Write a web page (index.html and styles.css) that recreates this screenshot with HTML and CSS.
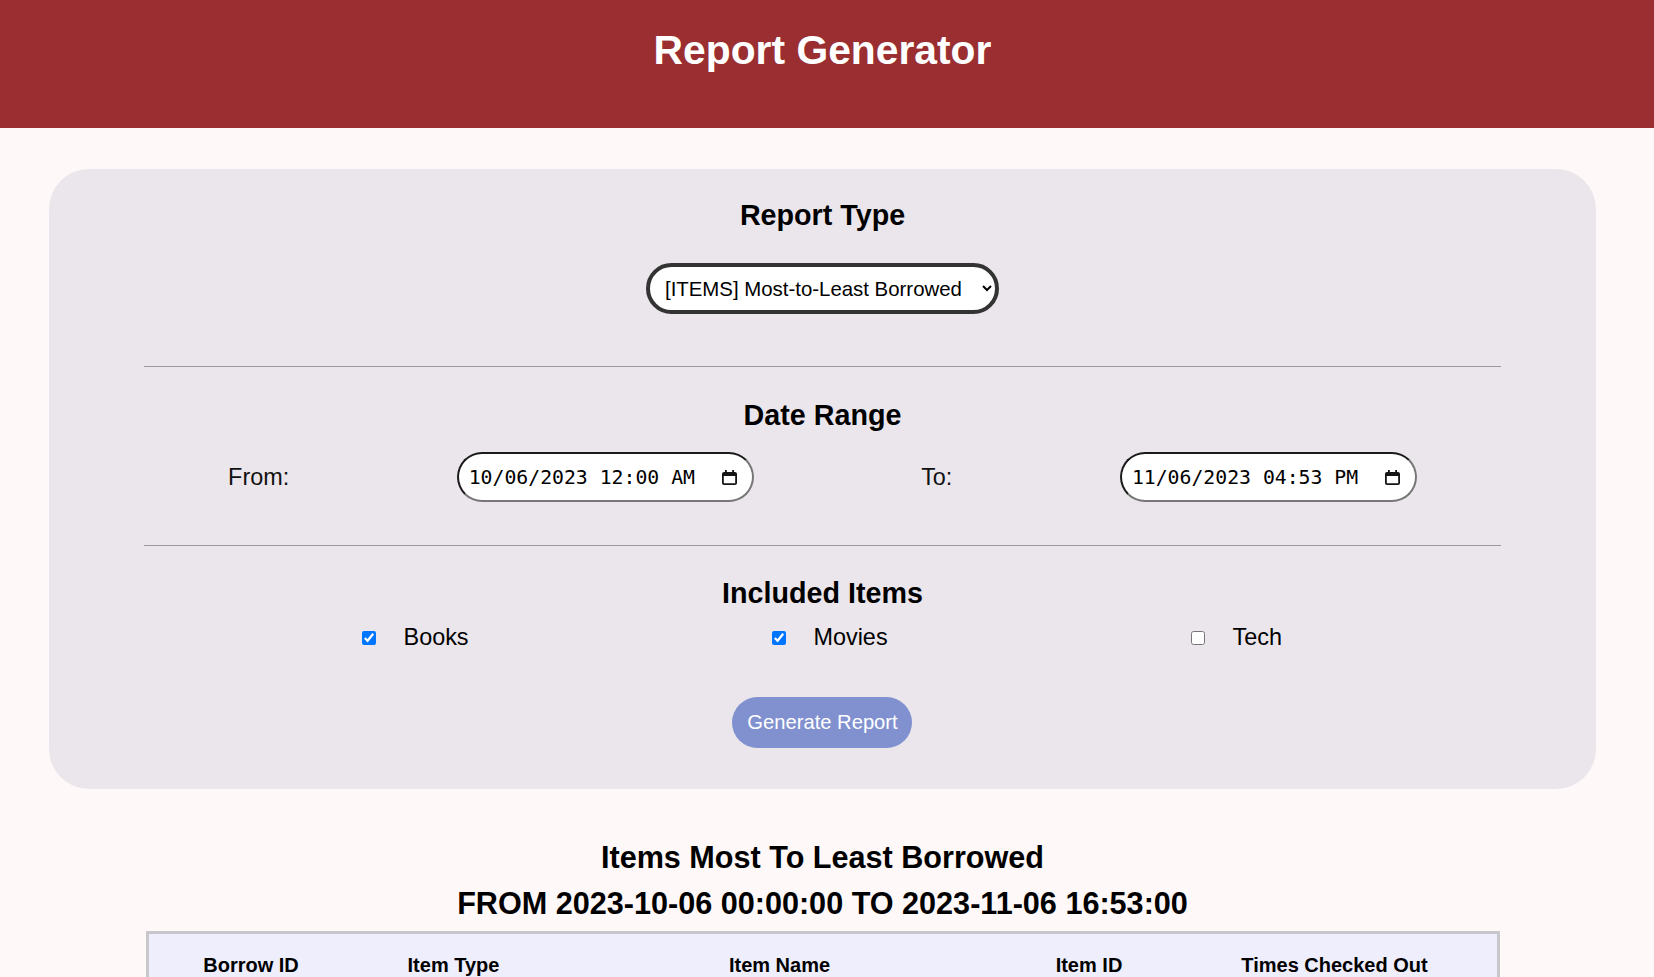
FILE: index.html
```html
<!DOCTYPE html>
<html lang="en">
<head>
<meta charset="utf-8">
<title>Report Generator</title>
<link rel="stylesheet" href="styles.css">
</head>
<body>
<header class="topbar">
  <h1 class="title">Report Generator</h1>
</header>
<main class="main">
  <section class="card">
    <h2 class="section-title">Report Type</h2>
    <div class="select-wrap">
      <select class="report-select">
        <option selected>[ITEMS] Most-to-Least Borrowed</option>
        <option>[ITEMS] Least-to-Most Borrowed</option>
        <option>[USERS] Most Active Borrowers</option>
      </select>
    </div>
    <hr class="divider">
    <h2 class="section-title">Date Range</h2>
    <div class="date-row">
      <span class="field-label">From:</span>
      <div class="datebox">
        <span class="datetext">10/06/2023 12:00 AM</span>
        <svg class="cal-icon" width="15" height="15" viewBox="0 0 15 15" aria-hidden="true"><path d="M13 2h-1V0h-1.8v2H4.8V0H3v2H2C.9 2 0 2.9 0 4v9c0 1.1.9 2 2 2h11c1.1 0 2-.9 2-2V4c0-1.1-.9-2-2-2zm.2 11.2H1.8V6h11.4v7.2z"/></svg>
      </div>
      <span class="field-label">To:</span>
      <div class="datebox">
        <span class="datetext">11/06/2023 04:53 PM</span>
        <svg class="cal-icon" width="15" height="15" viewBox="0 0 15 15" aria-hidden="true"><path d="M13 2h-1V0h-1.8v2H4.8V0H3v2H2C.9 2 0 2.9 0 4v9c0 1.1.9 2 2 2h11c1.1 0 2-.9 2-2V4c0-1.1-.9-2-2-2zm.2 11.2H1.8V6h11.4v7.2z"/></svg>
      </div>
    </div>
    <hr class="divider divider-second">
    <h2 class="section-title">Included Items</h2>
    <div class="check-row">
      <label class="check"><input class="check-box" type="checkbox" checked><span>Books</span></label>
      <label class="check"><input class="check-box" type="checkbox" checked><span>Movies</span></label>
      <label class="check"><input class="check-box" type="checkbox"><span>Tech</span></label>
    </div>
    <div class="btn-wrap">
      <button class="generate" type="button">Generate Report</button>
    </div>
  </section>

  <section class="results">
    <h3 class="results-title">Items Most To Least Borrowed</h3>
    <h3 class="results-title results-range">FROM 2023-10-06 00:00:00 TO 2023-11-06 16:53:00</h3>
    <table class="report-table">
      <colgroup>
        <col class="col-borrow">
        <col class="col-type">
        <col class="col-name">
        <col class="col-id">
        <col class="col-times">
      </colgroup>
      <thead>
        <tr>
          <th>Borrow ID</th>
          <th>Item Type</th>
          <th>Item Name</th>
          <th>Item ID</th>
          <th>Times Checked Out</th>
        </tr>
      </thead>
      <tbody></tbody>
    </table>
  </section>
</main>
</body>
</html>
```

FILE: styles.css
```css
html {
  background: #fef8f8;
}

body {
  margin: 0;
  background: #fef8f8;
  font-family: "Liberation Sans", Arial, sans-serif;
  color: #000;
}

.topbar {
  background: #9a2e30;
  height: 128px;
  box-sizing: border-box;
  padding: 27px 9px 0 0;
}

.title {
  margin: 0;
  color: #fff;
  font-size: 40.8px;
  line-height: 47px;
  font-weight: bold;
  text-align: center;
}

.main {
  margin-right: 9px;
  padding-bottom: 40px;
}

.card {
  width: 94%;
  box-sizing: border-box;
  margin: 41px auto 0;
  padding: 30px 95px 41px;
  background: #ebe6ec;
  border-radius: 40px;
}

.section-title {
  margin: 0;
  font-size: 28.7px;
  line-height: 32px;
  font-weight: bold;
  text-align: center;
}

.select-wrap {
  display: flex;
  justify-content: center;
  margin-top: 32px;
}

.report-select {
  width: 353px;
  height: 51px;
  box-sizing: border-box;
  font-family: "Liberation Sans", Arial, sans-serif;
  font-size: 20.4px;
  color: #000;
  padding: 0 8px 0 11px;
  border: 4px solid #333;
  border-radius: 26px;
  background-color: #fff;
}

.divider {
  margin: 52px 0 32px;
  height: 0;
  border: none;
  border-top: 1px solid #9a9a9a;
}

.divider-second {
  margin-top: 43px;
  margin-bottom: 31px;
}

.date-row {
  margin-top: 21px;
  display: flex;
  justify-content: space-around;
  align-items: center;
  height: 50px;
}

.field-label {
  font-size: 23.4px;
  line-height: 27px;
  color: #111;
}

.datebox {
  width: 297px;
  height: 50px;
  box-sizing: border-box;
  border: 2px solid;
  border-color: #1b1b1b #777 #777 #1b1b1b;
  border-radius: 25px;
  background: #fff;
  display: flex;
  align-items: center;
  justify-content: space-between;
  padding: 0 15px 0 10px;
  font-family: "DejaVu Sans Mono", monospace;
  font-size: 19.8px;
  color: #000;
}

.cal-icon {
  fill: #151515;
  flex: none;
}

.check-row {
  margin: 15px 67px 0 66px;
  display: flex;
  justify-content: space-around;
  align-items: center;
  height: 27px;
}

.check {
  display: flex;
  align-items: center;
  font-size: 23.4px;
  line-height: 27px;
  color: #000;
}

.check-box {
  width: 14px;
  height: 14px;
  margin: 0 27.5px 0 0;
}

.btn-wrap {
  display: flex;
  justify-content: center;
  margin-top: 46px;
}

.generate {
  width: 180px;
  height: 51px;
  padding: 0;
  border: none;
  border-radius: 26px;
  background: #8191cf;
  color: #fff;
  font-family: "Liberation Sans", Arial, sans-serif;
  font-size: 20.2px;
}

.results {
  width: 1354px;
  margin: 51px auto 0;
}

.results-title {
  margin: 0;
  font-size: 30.6px;
  line-height: 35px;
  font-weight: bold;
  text-align: center;
}

.results-range {
  margin-top: 11px;
}

.report-table {
  margin-top: 10px;
  width: 100%;
  table-layout: fixed;
  border-collapse: separate;
  border-spacing: 0;
  border: 3px solid #c8c8cc;
  background: #eeeefd;
}

.col-borrow { width: 205px; }
.col-type { width: 200px; }
.col-name { width: 452px; }
.col-id { width: 167px; }
.col-times { width: 324px; }

.report-table th {
  padding: 20px 0;
  font-size: 20px;
  line-height: 23px;
  font-weight: bold;
  text-align: center;
}
```
